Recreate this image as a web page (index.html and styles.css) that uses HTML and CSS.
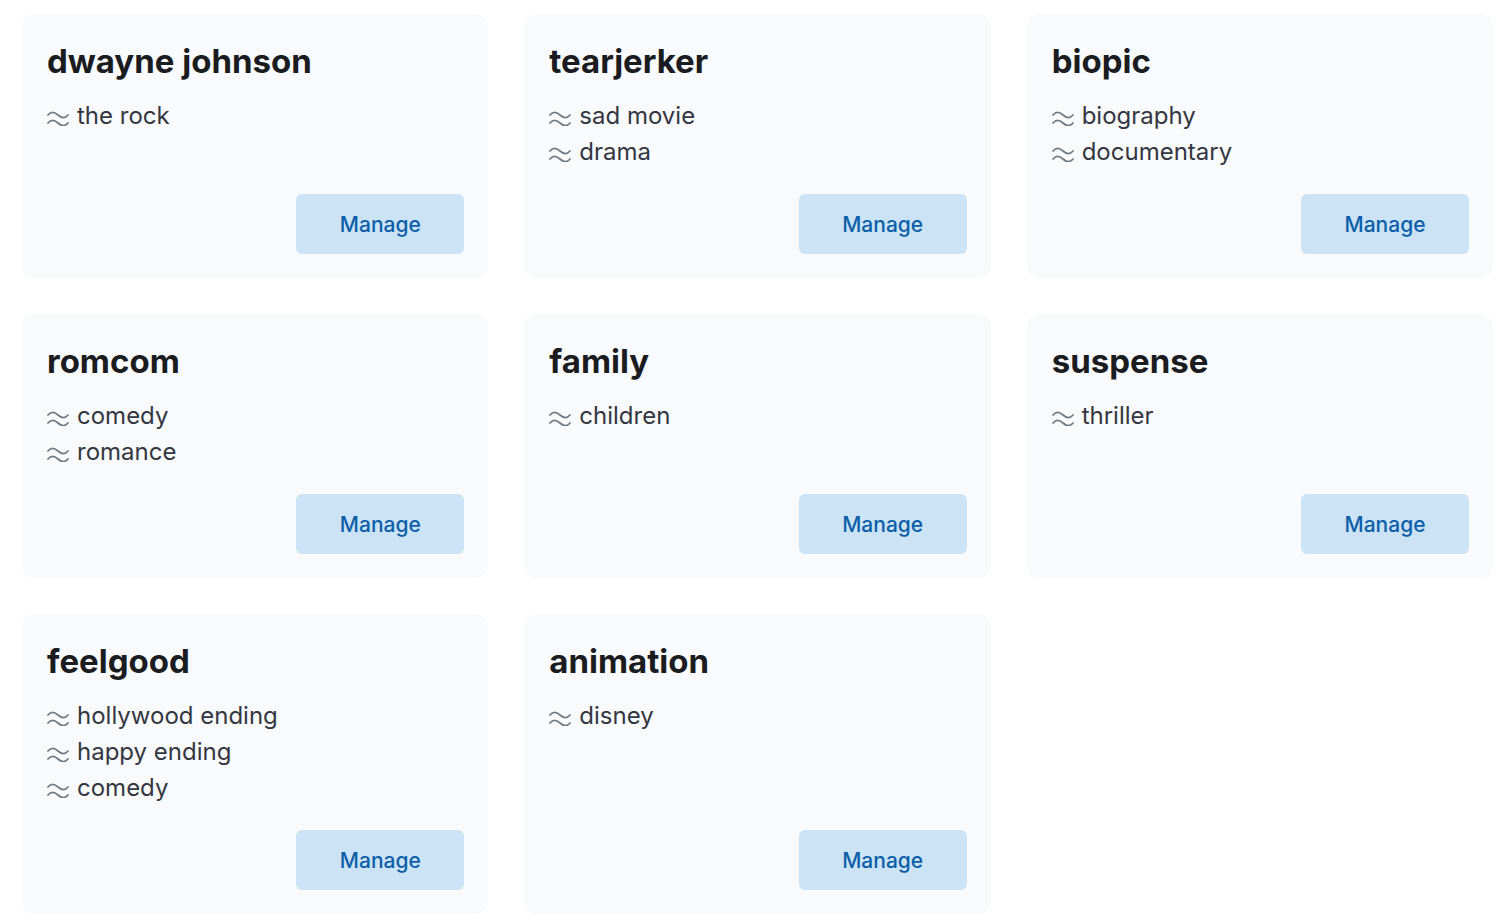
FILE: index.html
```html
<!DOCTYPE html>
<html>
<head>
<meta charset="utf-8">
<link rel="stylesheet" href="styles.css">
</head>
<body>
<div class="grid">
  <div class="card">
    <h2 class="title">dwayne johnson</h2>
    <ul class="syns">
      <li><svg class="ic" viewBox="0 0 22 16"><path d="M1 5c3-3.5 6-3.5 10 0s7 3.5 10 0M1 13c3-3.5 6-3.5 10 0s7 3.5 10 0"/></svg>the rock</li>
    </ul>
    <button class="btn">Manage</button>
  </div>
  <div class="card">
    <h2 class="title">tearjerker</h2>
    <ul class="syns">
      <li><svg class="ic" viewBox="0 0 22 16"><path d="M1 5c3-3.5 6-3.5 10 0s7 3.5 10 0M1 13c3-3.5 6-3.5 10 0s7 3.5 10 0"/></svg>sad movie</li>
      <li><svg class="ic" viewBox="0 0 22 16"><path d="M1 5c3-3.5 6-3.5 10 0s7 3.5 10 0M1 13c3-3.5 6-3.5 10 0s7 3.5 10 0"/></svg>drama</li>
    </ul>
    <button class="btn">Manage</button>
  </div>
  <div class="card">
    <h2 class="title">biopic</h2>
    <ul class="syns">
      <li><svg class="ic" viewBox="0 0 22 16"><path d="M1 5c3-3.5 6-3.5 10 0s7 3.5 10 0M1 13c3-3.5 6-3.5 10 0s7 3.5 10 0"/></svg>biography</li>
      <li><svg class="ic" viewBox="0 0 22 16"><path d="M1 5c3-3.5 6-3.5 10 0s7 3.5 10 0M1 13c3-3.5 6-3.5 10 0s7 3.5 10 0"/></svg>documentary</li>
    </ul>
    <button class="btn">Manage</button>
  </div>
  <div class="card">
    <h2 class="title">romcom</h2>
    <ul class="syns">
      <li><svg class="ic" viewBox="0 0 22 16"><path d="M1 5c3-3.5 6-3.5 10 0s7 3.5 10 0M1 13c3-3.5 6-3.5 10 0s7 3.5 10 0"/></svg>comedy</li>
      <li><svg class="ic" viewBox="0 0 22 16"><path d="M1 5c3-3.5 6-3.5 10 0s7 3.5 10 0M1 13c3-3.5 6-3.5 10 0s7 3.5 10 0"/></svg>romance</li>
    </ul>
    <button class="btn">Manage</button>
  </div>
  <div class="card">
    <h2 class="title">family</h2>
    <ul class="syns">
      <li><svg class="ic" viewBox="0 0 22 16"><path d="M1 5c3-3.5 6-3.5 10 0s7 3.5 10 0M1 13c3-3.5 6-3.5 10 0s7 3.5 10 0"/></svg>children</li>
    </ul>
    <button class="btn">Manage</button>
  </div>
  <div class="card">
    <h2 class="title">suspense</h2>
    <ul class="syns">
      <li><svg class="ic" viewBox="0 0 22 16"><path d="M1 5c3-3.5 6-3.5 10 0s7 3.5 10 0M1 13c3-3.5 6-3.5 10 0s7 3.5 10 0"/></svg>thriller</li>
    </ul>
    <button class="btn">Manage</button>
  </div>
  <div class="card">
    <h2 class="title">feelgood</h2>
    <ul class="syns">
      <li><svg class="ic" viewBox="0 0 22 16"><path d="M1 5c3-3.5 6-3.5 10 0s7 3.5 10 0M1 13c3-3.5 6-3.5 10 0s7 3.5 10 0"/></svg>hollywood ending</li>
      <li><svg class="ic" viewBox="0 0 22 16"><path d="M1 5c3-3.5 6-3.5 10 0s7 3.5 10 0M1 13c3-3.5 6-3.5 10 0s7 3.5 10 0"/></svg>happy ending</li>
      <li><svg class="ic" viewBox="0 0 22 16"><path d="M1 5c3-3.5 6-3.5 10 0s7 3.5 10 0M1 13c3-3.5 6-3.5 10 0s7 3.5 10 0"/></svg>comedy</li>
    </ul>
    <button class="btn">Manage</button>
  </div>
  <div class="card">
    <h2 class="title">animation</h2>
    <ul class="syns">
      <li><svg class="ic" viewBox="0 0 22 16"><path d="M1 5c3-3.5 6-3.5 10 0s7 3.5 10 0M1 13c3-3.5 6-3.5 10 0s7 3.5 10 0"/></svg>disney</li>
    </ul>
    <button class="btn">Manage</button>
  </div>
</div>
</body>
</html>
```
FILE: styles.css
```css
* { box-sizing: border-box; }
html, body { margin: 0; padding: 0; background: #ffffff; }
body {
  font-family: Inter, "Noto Sans", sans-serif;
  color: #1b1c1f;
}
.grid {
  display: grid;
  grid-template-columns: repeat(3, 1fr);
  column-gap: 36px;
  row-gap: 36px;
  padding: 14px 8px 0 22px;
}
.card {
  background: #f8fafc;
  border-radius: 12px;
  padding: 24px;
  display: flex;
  flex-direction: column;
}
.title {
  margin: 0 0 14px 0;
  padding-left: 1px;
  font-size: 33px;
  line-height: 46px;
  font-weight: 700;
  color: #1b1c1f;
}
.syns {
  list-style: none;
  margin: 0 0 24px 0;
  padding: 0;
}
.syns li {
  display: flex;
  align-items: center;
  font-size: 24px;
  line-height: 36px;
  color: #343741;
  padding-left: 1px;
}
.ic {
  width: 22px;
  height: 16px;
  margin-right: 8px;
  margin-top: 3px;
  flex: none;
  fill: none;
  stroke: #727985;
  stroke-width: 1.7;
  stroke-linecap: round;
}
.btn {
  margin-top: auto;
  align-self: flex-end;
  width: 168px;
  height: 60px;
  border: none;
  border-radius: 6px;
  background: #cce2f5;
  color: #0b5fa8;
  font-family: Inter, "Noto Sans", sans-serif;
  font-size: 21px;
  font-weight: 450;
}
```
